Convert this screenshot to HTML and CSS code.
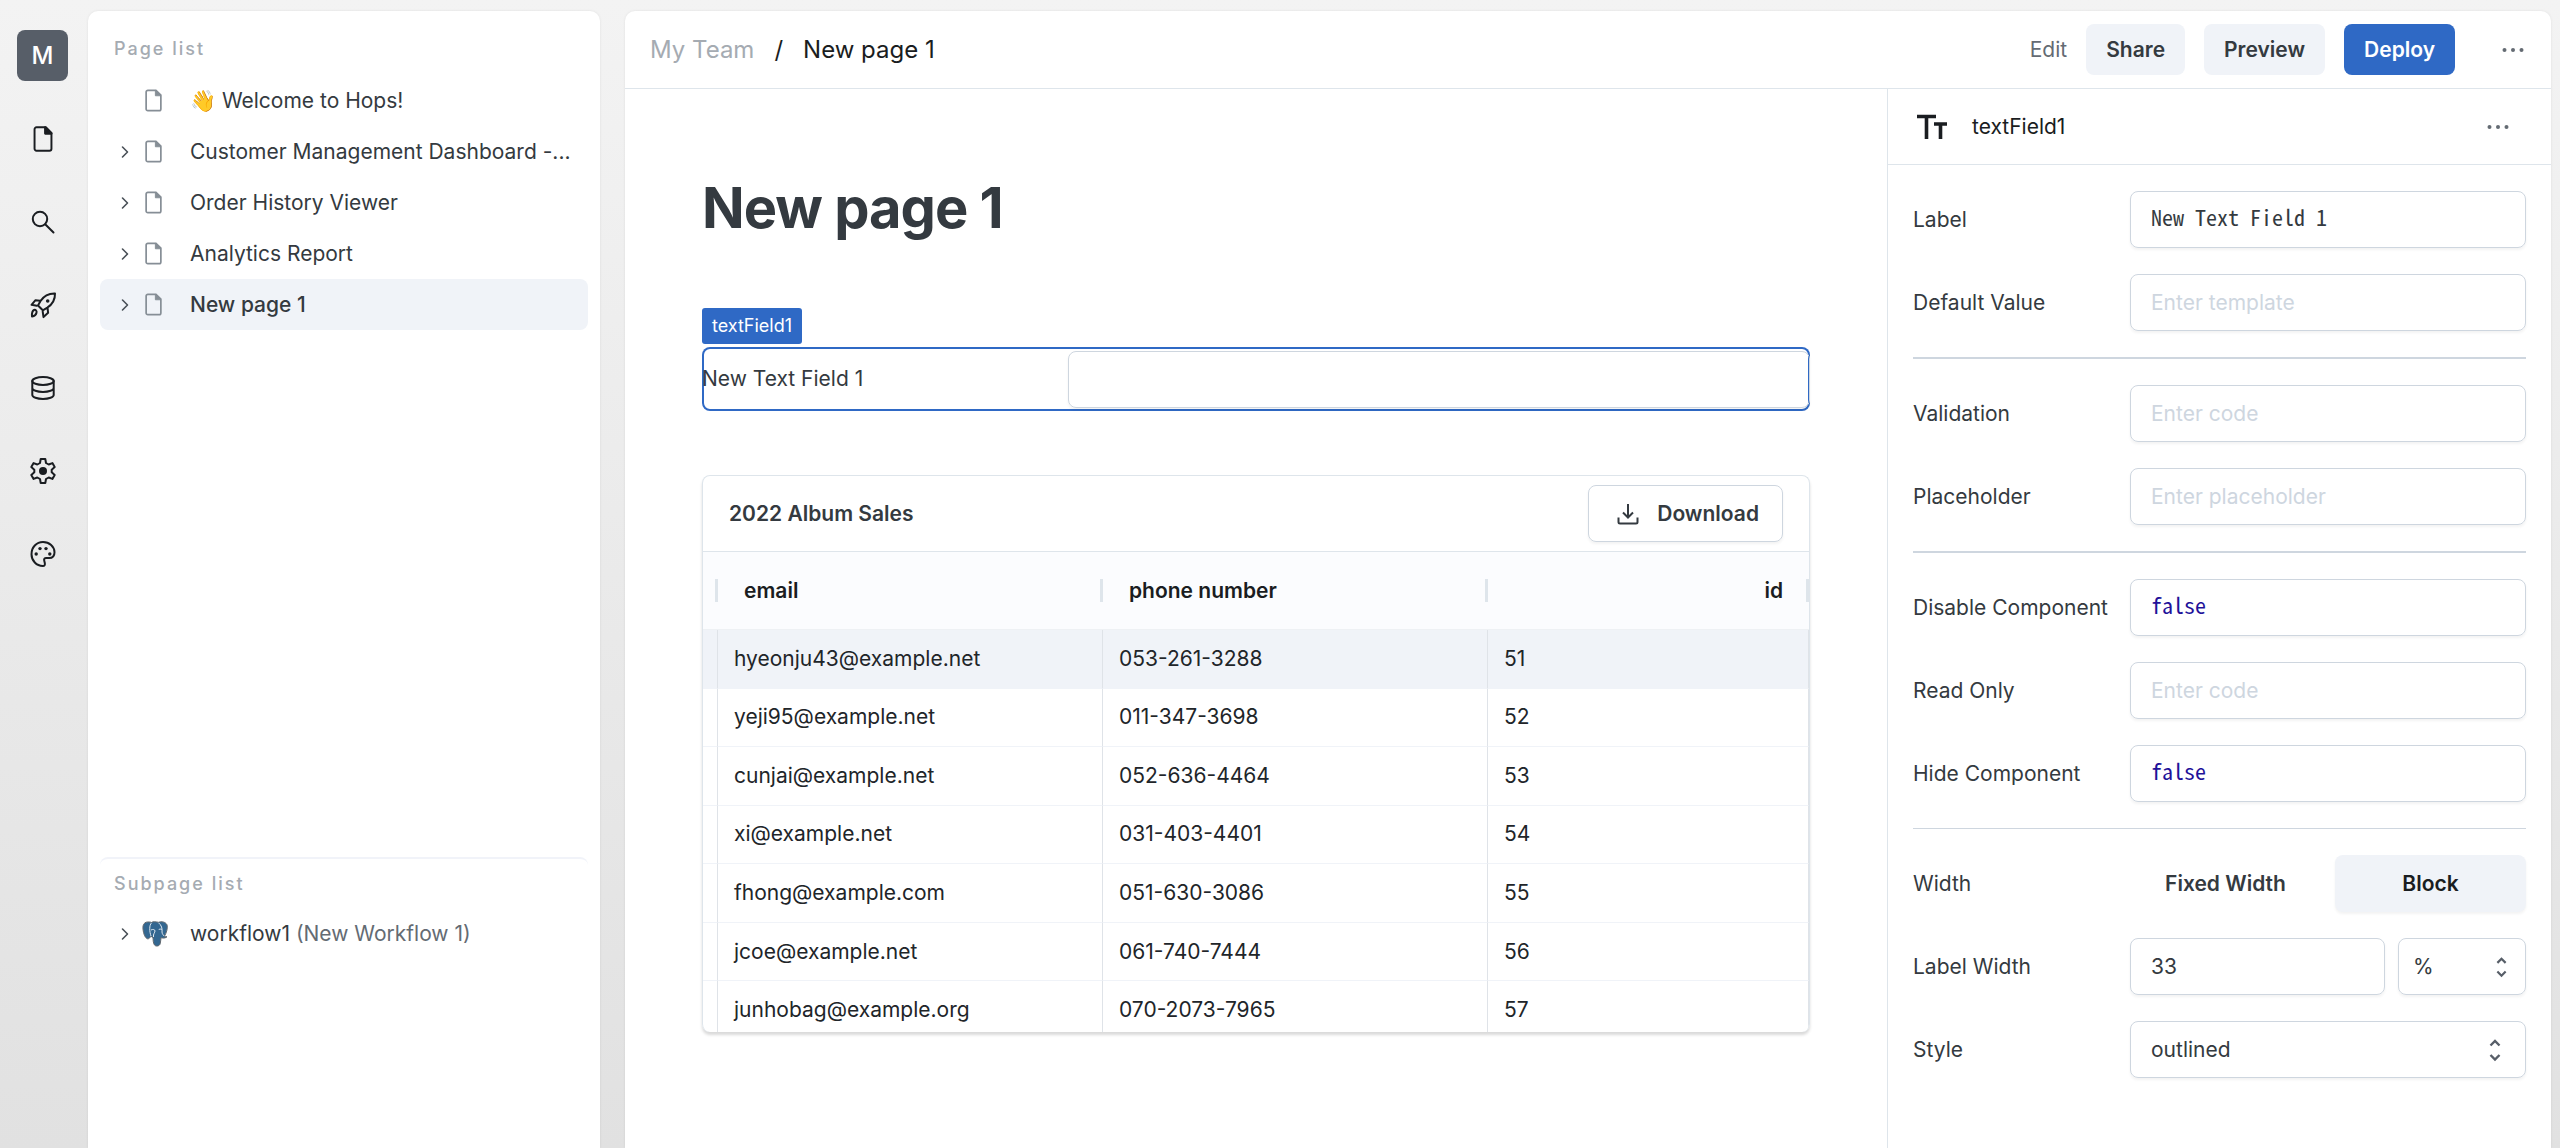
FILE: index.html
```html
<!DOCTYPE html>
<html lang="en">
<head>
<meta charset="utf-8">
<title>New page 1 – Hops</title>
<link rel="stylesheet" href="styles.css">
</head>
<body>
<svg class="sprite" aria-hidden="true">
  <symbol id="file" viewBox="0 0 18 24"><path d="M3 1.2h8.6L16.8 6.4V21a1.8 1.8 0 0 1-1.8 1.8H3A1.8 1.8 0 0 1 1.2 21V3A1.8 1.8 0 0 1 3 1.2z" fill="none" stroke="currentColor" stroke-width="1.8"/><path d="M11 1.2V7h5.8z" fill="currentColor" stroke="currentColor"/></symbol>
  <symbol id="chevron" viewBox="0 0 8 12"><path d="M1.5 1l5 5-5 5" fill="none" stroke="currentColor" stroke-width="1.6" stroke-linecap="round" stroke-linejoin="round"/></symbol>
  <symbol id="dots" viewBox="0 0 22 6"><circle cx="2.5" cy="3" r="2"/><circle cx="11" cy="3" r="2"/><circle cx="19.5" cy="3" r="2"/></symbol>
  <symbol id="updown" viewBox="0 0 12 24"><path d="M1.5 7.5L6 3l4.500 4.500M1.500 17L6 21.500 10.500 17" fill="none" stroke="currentColor" stroke-width="2.400"/></symbol>
</svg>
<div class="app">
  <nav class="rail" aria-label="Workspace">
    <button class="avatar" type="button">M</button>
    <button class="rail-btn" type="button" aria-label="Pages"><svg width="22" height="26"><use href="#file"/></svg></button>
    <button class="rail-btn" type="button" aria-label="Search"><svg width="28" height="28" viewBox="0 0 28 28"><circle cx="11" cy="11" r="7.200"/><path d="M16.200 16.200l8.300 8.300"/></svg></button>
    <button class="rail-btn" type="button" aria-label="Deployments"><svg width="28" height="28" viewBox="0 0 28 28"><path d="M26 2.500c-6.500-.2-11 2.200-14.500 7.500L9 14.500l4.800 4.800 4.500-2.600C23.600 13.200 26.200 8.800 26 2.500zM11 9.800l-4.500-.6-4 4.600 5.300.9M18.600 17.200l.5 4.600-4.600 4.300-.8-5.600M3 25.500c-.3-3.300.3-5.600 2-6.500 1.500-.7 3 .8 2.500 2.700-.5 2.100-2.200 3.300-4.500 3.800z"/><circle cx="18.700" cy="10" r="1.800" fill="currentColor" stroke="none"/></svg></button>
    <button class="rail-btn" type="button" aria-label="Data"><svg width="28" height="28" viewBox="0 0 28 28"><ellipse cx="14" cy="7" rx="10.700" ry="3.900"/><path d="M3.300 7v14c0 2.200 4.800 3.900 10.700 3.900S24.700 23.200 24.700 21V7M3.300 14c0 2.200 4.800 3.900 10.700 3.900S24.700 16.200 24.700 14"/></svg></button>
    <button class="rail-btn" type="button" aria-label="Settings"><svg width="28" height="28" viewBox="0 0 28 28"><path d="M11.700 2h4.600l.7 4 2.700 1.500 3.700-1.400 2.300 4-3 2.600v2.600l3 2.600-2.300 4-3.700-1.400-2.700 1.500-.7 4h-4.600l-.7-4-2.700-1.500-3.700 1.400-2.300-4 3-2.600v-2.600l-3-2.600 2.300-4 3.700 1.400L11 6z"/><circle cx="14" cy="14" r="4" fill="currentColor" stroke="none"/></svg></button>
    <button class="rail-btn" type="button" aria-label="Theme"><svg width="28" height="28" viewBox="0 0 28 28"><path d="M14 2C7.400 2 2.500 7.400 2.500 14.200 2.500 20.700 7.500 26 13.800 26c1.800 0 2.400-1.200 2-3l-.6-2.500c-.4-1.500.4-2.500 2-2.500h3c3.500 0 5.300-2.400 5.300-5.800C25.500 6.300 20.300 2 14 2z"/><g fill="currentColor" stroke="none"><circle cx="7.200" cy="14" r="1.700"/><circle cx="11" cy="8.600" r="1.700"/><circle cx="17" cy="8.600" r="1.700"/><circle cx="20.800" cy="14" r="1.700"/></g></svg></button>
  </nav>

  <aside class="panel pages">
    <section class="page-list">
      <h2 class="caption">Page list</h2>
      <ul class="tree">
        <li class="item"><span class="twist"></span><svg class="doc"><use href="#file"/></svg><a href="#welcome">👋 Welcome to Hops!</a></li>
        <li class="item"><svg class="twist"><use href="#chevron"/></svg><svg class="doc"><use href="#file"/></svg><a href="#customers">Customer Management Dashboard -...</a></li>
        <li class="item"><svg class="twist"><use href="#chevron"/></svg><svg class="doc"><use href="#file"/></svg><a href="#orders">Order History Viewer</a></li>
        <li class="item"><svg class="twist"><use href="#chevron"/></svg><svg class="doc"><use href="#file"/></svg><a href="#analytics">Analytics Report</a></li>
        <li class="item current"><svg class="twist"><use href="#chevron"/></svg><svg class="doc"><use href="#file"/></svg><a href="#new" aria-current="page">New page 1</a></li>
      </ul>
    </section>
    <section class="subpages">
      <h2 class="caption">Subpage list</h2>
      <ul class="tree">
        <li class="item"><svg class="twist"><use href="#chevron"/></svg>
          <svg class="pg" viewBox="0 0 26 26"><path d="M7 1C2.500.5.500 3.500 1 8c.4 4.500 2 9 4.500 9.800 1.500.3 2.500-1.300 3.500-2.500l2 1.200c.2 3 .1 5.500 1.500 7.500 1.500 1.800 5 1.200 5.700-1.300.6-2 .4-4 .8-6 2 .7 5 .4 6-1-1.500.2-2.400 0-2.500-.6C24.500 12 26 6.500 25 3.800 23.500.8 19.500.2 16.500 1.300 13.500.6 10.500.5 9.500 1.500 8.800 1.200 8 1 7 1z" fill="#336791" stroke="#62686e" stroke-width="1"/><path d="M9.500 2C7 4 7.500 11 9 15M16.500 1.800c3 2.200 4 6 3.500 9.200 0 2 1.500 3 2 4M9 9c2-1 4-.5 4 1s-2 3-1.500 6M19.800 8.500c-1.500-.8-3-.3-3 .5" fill="none" stroke="#dfe8f0" stroke-width="1"/></svg>
          <a href="#workflow1">workflow1 <span class="alias">(New Workflow 1)</span></a></li>
      </ul>
    </section>
  </aside>

  <main class="panel work">
    <header class="topbar">
      <nav class="crumbs" aria-label="Breadcrumb"><a class="team" href="#team">My Team</a><span>/</span><span>New page 1</span></nav>
      <a class="edit" href="#edit">Edit</a>
      <button class="btn" type="button">Share</button>
      <button class="btn" type="button">Preview</button>
      <button class="btn primary" type="button">Deploy</button>
      <button class="more" type="button" aria-label="More"><svg width="22" height="6"><use href="#dots"/></svg></button>
    </header>
    <div class="body">
      <section class="canvas">
        <h1>New page 1</h1>
        <div class="widget">
          <span class="tag">textField1</span>
          <div class="field-widget">
            <label for="demo">New Text Field 1</label>
            <input id="demo" type="text">
          </div>
        </div>
        <section class="card">
          <header class="card-head">
            <h2>2022 Album Sales</h2>
            <button class="download" type="button"><svg width="22" height="22" viewBox="0 0 22 22"><path d="M11 1v13M6 9.500l5 5 5-5M1.500 14.500V19A1.500 1.500 0 0 0 3 20.500h16a1.500 1.500 0 0 0 1.500-1.500v-4.500"/></svg>Download</button>
          </header>
          <div class="scroller">
            <table>
              <colgroup><col class="c-edge"><col class="c-wide"><col class="c-wide"><col></colgroup>
              <thead><tr><th></th><th>email</th><th>phone number</th><th class="num">id</th></tr></thead>
              <tbody>
                <tr class="selected"><td></td><td>hyeonju43@example.net</td><td>053-261-3288</td><td>51</td></tr>
                <tr><td></td><td>yeji95@example.net</td><td>011-347-3698</td><td>52</td></tr>
                <tr><td></td><td>cunjai@example.net</td><td>052-636-4464</td><td>53</td></tr>
                <tr><td></td><td>xi@example.net</td><td>031-403-4401</td><td>54</td></tr>
                <tr><td></td><td>fhong@example.com</td><td>051-630-3086</td><td>55</td></tr>
                <tr><td></td><td>jcoe@example.net</td><td>061-740-7444</td><td>56</td></tr>
                <tr><td></td><td>junhobag@example.org</td><td>070-2073-7965</td><td>57</td></tr>
              </tbody>
            </table>
          </div>
        </section>
      </section>

      <aside class="inspector">
        <header class="insp-head">
          <svg width="32" height="26" viewBox="0 0 32 26"><path d="M1 2.500h19M10.500 2.500V25M18 10h13M24.500 10V25" fill="none" stroke="currentColor" stroke-width="3.600"/></svg>
          <span>textField1</span>
          <button class="more" type="button" aria-label="More"><svg width="22" height="6"><use href="#dots"/></svg></button>
        </header>
        <form class="props">
          <div class="row"><label for="p1">Label</label><input class="code" id="p1" type="text" value="New Text Field 1"></div>
          <div class="row"><label for="p2">Default Value</label><input id="p2" type="text" placeholder="Enter template"></div>
          <hr>
          <div class="row"><label for="p3">Validation</label><input id="p3" type="text" placeholder="Enter code"></div>
          <div class="row"><label for="p4">Placeholder</label><input id="p4" type="text" placeholder="Enter placeholder"></div>
          <hr>
          <div class="row"><label for="p5">Disable Component</label><input class="code atom" id="p5" type="text" value="false"></div>
          <div class="row"><label for="p6">Read Only</label><input id="p6" type="text" placeholder="Enter code"></div>
          <div class="row"><label for="p7">Hide Component</label><input class="code atom" id="p7" type="text" value="false"></div>
          <hr class="thin">
          <div class="row"><span id="wl">Width</span><div class="segments" role="group" aria-labelledby="wl"><button type="button">Fixed Width</button><button class="on" type="button">Block</button></div></div>
          <div class="row"><label for="p8">Label Width</label><div class="pair"><input id="p8" type="text" value="33"><span class="select unit"><select aria-label="Unit"><option>%</option></select><svg width="11" height="22"><use href="#updown"/></svg></span></div></div>
          <div class="row"><label for="p9">Style</label><span class="select"><select id="p9"><option>outlined</option></select><svg width="12" height="24"><use href="#updown"/></svg></span></div>
        </form>
      </aside>
    </div>
  </main>
</div>
</body>
</html>
```
FILE: styles.css
```css
* { box-sizing: border-box; }

body {
  margin: 0;
  font: 21px/32px Inter, "Noto Sans", sans-serif;
  color: #343a40;
  background: linear-gradient(#f3f3f3, #e1e1e1);
}

h1, h2, ul { margin: 0; padding: 0; }
ul { list-style: none; }
a { color: inherit; text-decoration: none; }
button, input, select { font: inherit; color: inherit; margin: 0; }
button { border: 0; padding: 0; background: none; }
.sprite { position: absolute; width: 0; height: 0; }

.app {
  display: grid;
  grid-template-columns: 88px 512px minmax(0, 1fr);
  min-height: 100vh;
  padding: 11px 9px 0 0;
}

/* Icon rail */
.rail {
  display: flex;
  flex-direction: column;
  align-items: center;
  gap: 32px;
  padding: 19px 3px 0 0;
}
.avatar {
  width: 51px;
  height: 51px;
  border-radius: 8px;
  background: #575e68;
  color: #fff;
  font-size: 24px;
  font-weight: 500;
}
.rail-btn {
  display: grid;
  place-items: center;
  width: 51px;
  height: 51px;
  color: #1a1d21;
}
.rail-btn svg { fill: none; stroke: currentColor; stroke-width: 2; stroke-linejoin: round; stroke-linecap: round; }

/* Page tree */
.panel {
  background: #fff;
  border-radius: 10px 10px 0 0;
  box-shadow: 0 0 3px rgba(0, 0, 0, .08);
}
.pages { display: flex; flex-direction: column; padding: 22px 12px 0; }
.page-list { height: 824px; }
.caption {
  padding: 0 14px;
  font-size: 18px;
  font-weight: 500;
  line-height: 32px;
  letter-spacing: 2px;
  color: #a5abb2;
}
.tree { padding-top: 10px; }
.item {
  display: flex;
  align-items: center;
  height: 51px;
  padding: 0 12px 0 21px;
  border-radius: 8px;
}
.twist { flex: none; width: 8px; height: 14px; margin-right: 16px; color: #495057; }
.doc { flex: none; width: 17px; height: 23px; margin-right: 28px; color: #868e96; }
.pg { flex: none; width: 26px; height: 28px; margin: 0 22px 0 -3px; }
.item a { white-space: nowrap; }
.current { background: #f0f3f8; font-weight: 500; }
.alias { color: #646b73; }
.subpages { padding-top: 9px; border-top: 2px solid #f1f3f9; border-radius: 8px; }
.subpages .tree { padding-top: 8px; }

/* Work area */
.work { display: flex; flex-direction: column; margin-left: 25px; }
.topbar {
  display: flex;
  align-items: center;
  gap: 19px;
  height: 78px;
  padding: 0 25px;
  border-bottom: 1px solid #dee5eb;
}
.crumbs { display: flex; gap: 20px; flex: 1; font-size: 24px; color: #1a1d21; }
.team { color: #a5abb2; }
.edit { color: #646b73; }
.btn {
  height: 51px;
  padding: 0 20px;
  border-radius: 8px;
  background: #f0f3f8;
  font-weight: 600;
}
.primary { background: #2f69c5; color: #fff; }
.more { display: grid; place-items: center; width: 26px; height: 32px; margin-left: 26px; color: #646b73; }
.more svg { fill: currentColor; }

.body { display: grid; grid-template-columns: minmax(0, 1fr) 664px; flex: 1; }
.canvas { padding: 77px 77px 0; }
h1 { font-size: 56px; line-height: 84px; font-weight: 700; letter-spacing: -1px; }

.widget { margin-top: 58px; }
.tag {
  display: block;
  width: max-content;
  padding: 0 10px;
  margin-bottom: 3px;
  border-radius: 3px;
  background: #2f69c5;
  color: #fff;
  font-size: 18px;
  line-height: 36px;
}
.field-widget {
  display: grid;
  grid-template-columns: 33% 67%;
  align-items: center;
  height: 64px;
  border-radius: 8px;
  box-shadow: inset 0 0 0 2px #2f69c5;
}

input, select {
  display: block;
  width: 100%;
  height: 57px;
  padding: 0 20px;
  border: 1px solid #ced6df;
  border-radius: 8px;
  background: transparent;
  box-shadow: 0 2px 3px rgba(0, 0, 0, .05);
  appearance: none;
}
input::placeholder { color: #ced6df; opacity: 1; }

/* Data table */
.card {
  margin-top: 64px;
  border: 1px solid #dee5eb;
  border-bottom: 0;
  border-radius: 8px;
  box-shadow: 0 3px 3px rgba(0, 0, 0, .15);
  overflow: hidden;
}
.card-head {
  display: flex;
  align-items: center;
  justify-content: space-between;
  height: 76px;
  padding: 0 26px;
  border-bottom: 1px solid #dee5eb;
}
.card-head h2 { font-size: 21px; font-weight: 600; }
.download {
  display: flex;
  align-items: center;
  gap: 18px;
  height: 57px;
  padding: 0 23px 0 28px;
  border: 1px solid #ced6df;
  border-radius: 8px;
  box-shadow: 0 2px 3px rgba(0, 0, 0, .05);
  font-weight: 600;
}
.download svg { fill: none; stroke: currentColor; stroke-width: 2; }
.scroller { height: 480px; overflow: hidden; }
table { width: 100%; height: 488px; table-layout: fixed; border-collapse: separate; border-spacing: 0; color: #212529; }
.c-edge { width: 15px; }
.c-wide { width: 385px; }
th {
  height: 78px;
  padding: 0 26px;
  text-align: left;
  font-weight: 600;
  color: #1a1d21;
  border-bottom: 1px solid #eef1f4;
  background: linear-gradient(#dee5eb, #dee5eb) right center / 3px 23px no-repeat #fbfcfe;
}
th:first-child { padding: 0; }
.num { text-align: right; }
td { padding: 0 16px; border-right: 1px solid #dfe3e8; border-bottom: 1px solid #f0f3f8; }
td:first-child { padding: 0; }
.selected { background: #f0f3f8; }

/* Inspector */
.inspector { border-left: 1px solid #dee5eb; }
.insp-head {
  display: flex;
  align-items: center;
  gap: 24px;
  height: 76px;
  padding: 0 40px 0 28px;
  border-bottom: 1px solid #dee5eb;
  color: #1a1d21;
}
.insp-head .more { margin-left: auto; }
.props { display: flex; flex-direction: column; gap: 26px; padding: 26px 25px; }
.row { display: grid; grid-template-columns: 217px minmax(0, 1fr); align-items: center; height: 57px; }
hr { width: 100%; height: 2px; margin: 0; border: 0; background: #ced6df; }
.thin { height: 1px; }
.code { font-family: "Noto Sans Mono CJK SC", "Liberation Mono", monospace; font-size: 22px; padding-bottom: 7px; }
.atom { color: #221199; }
.segments { display: grid; grid-template-columns: 1fr 1fr; gap: 14px; }
.segments button { height: 57px; border-radius: 8px; font-weight: 600; }
.segments .on { background: #f0f3f8; color: #1a1d21; box-shadow: 0 2px 3px rgba(0, 0, 0, .05); }
.pair { display: grid; grid-template-columns: minmax(0, 1fr) 128px; gap: 13px; }
.select { display: grid; align-items: center; color: #343a40; }
.select select, .select svg { grid-area: 1 / 1; }
.select svg { justify-self: end; margin-right: 25px; color: #575e68; pointer-events: none; }
.unit select { padding: 0 14px; }
.unit svg { margin-right: 19px; }
```
